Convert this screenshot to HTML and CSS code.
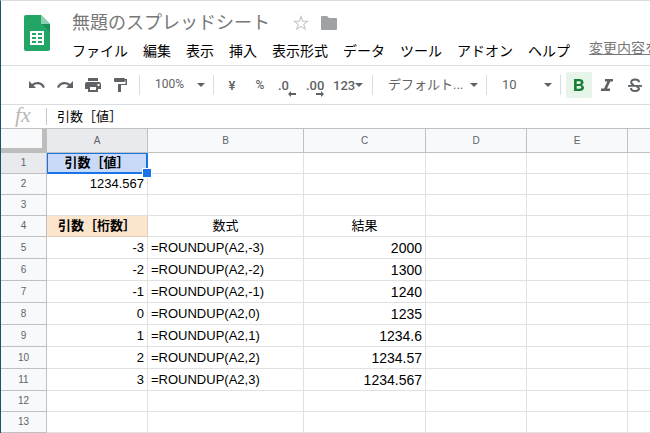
FILE: index.html
```html
<!doctype html>
<html lang="ja">
  <head>
    <meta charset="UTF-8" />
    <meta name="viewport" content="width=device-width, initial-scale=1.0" />
    <title>無題のスプレッドシート</title>
    <link rel="stylesheet" href="styles.css">
  </head>
  <body>
    <div class="app">
      <header class="header">
        <svg class="logo" width="26" height="36" viewBox="0 0 26 36" aria-hidden="true">
          <path d="M2 0H17L26 9V34a2 2 0 0 1-2 2H2a2 2 0 0 1-2-2V2a2 2 0 0 1 2-2z" fill="#23a566" />
          <path d="M17 0l9 9h-9z" fill="#8ed1b1" />
          <path d="M18 9h8v8z" fill="#1c8f57" />
          <path d="M6 16h14v14H6z" fill="#fff" />
          <path d="M8 18h4v2H8zM14 18h4v2h-4zM8 22h4v2H8zM14 22h4v2h-4zM8 26h4v2H8zM14 26h4v2h-4z" fill="#23a566" />
        </svg>
        <div class="header-main">
          <div class="title-row">
            <h1 class="title">無題のスプレッドシート</h1>
            <svg class="star" width="16" height="16" viewBox="0 0 16 16" aria-hidden="true">
              <path d="M8 1.500l1.700 4.600 4.900.2-3.800 3.100 1.300 4.700L8 11.400l-4.100 2.700 1.300-4.700L1.400 6.300l4.900-.2z" fill="none" stroke="#c6c6c6" stroke-width="1.1" />
            </svg>
            <svg width="16" height="14" viewBox="0 0 16 14" aria-hidden="true">
              <path d="M1 0H6l2 2h7a1 1 0 0 1 1 1v10a1 1 0 0 1-1 1H1a1 1 0 0 1-1-1V1a1 1 0 0 1 1-1z" fill="#a0a1a5" />
            </svg>
          </div>
          <nav class="menu">
            <button class="menu-item">ファイル</button>
            <button class="menu-item">編集</button>
            <button class="menu-item">表示</button>
            <button class="menu-item">挿入</button>
            <button class="menu-item">表示形式</button>
            <button class="menu-item">データ</button>
            <button class="menu-item">ツール</button>
            <button class="menu-item">アドオン</button>
            <button class="menu-item">ヘルプ</button>
            <a class="save-state" href="#">変更内容を</a>
          </nav>
        </div>
      </header>

      <div class="toolbar">
        <button class="tool" aria-label="元に戻す">
          <svg width="18" height="18" viewBox="0 0 18 18"><path d="M1 5v7h7L5.600 9.600C6.700 8.700 8 8.200 9.500 8.200c2.600 0 4.600 1.500 5.400 3.900l2.100-.8C15.900 8.100 13 6 9.500 6 7.400 6 5.500 6.800 4 8z" /></svg>
        </button>
        <button class="tool" aria-label="やり直す">
          <svg width="18" height="18" viewBox="0 0 18 18"><path d="M17 5v7h-7l2.400-2.400C11.300 8.700 10 8.200 8.500 8.200c-2.600 0-4.600 1.500-5.400 3.900L1 11.300C2.100 8.100 5 6 8.500 6c2.100 0 4 .8 5.500 2z" /></svg>
        </button>
        <button class="tool" aria-label="印刷">
          <svg width="18" height="18" viewBox="0 0 18 18"><path fill-rule="evenodd" d="M4 2h10v3H4zM3 6h12a2 2 0 0 1 2 2v5h-3v3H4v-3H1V8a2 2 0 0 1 2-2zm3 5v3h6v-3zm7.500-3v2h2V8z" /></svg>
        </button>
        <button class="tool" aria-label="書式を貼り付け">
          <svg width="18" height="18" viewBox="0 0 18 18"><path d="M3 2h9a1 1 0 0 1 1 1h2v6H9v7H6V8h7.500V4.500H13V5a1 1 0 0 1-1 1H3a1 1 0 0 1-1-1V3a1 1 0 0 1 1-1z" /></svg>
        </button>
        <span class="separator"></span>
        <label class="dropdown zoom-level">
          <select aria-label="ズーム"><option>100%</option></select>
        </label>
        <span class="separator"></span>
        <button class="tool">¥</button>
        <button class="tool tool-percent">%</button>
        <button class="tool tool-decimal">.0
          <svg class="arrow" width="8" height="6" viewBox="0 0 8 6"><path d="M0 3l3-3v2h5v2H3v2z" /></svg>
        </button>
        <button class="tool tool-decimal">.00
          <svg class="arrow" width="8" height="6" viewBox="0 0 8 6"><path d="M8 3L5 0v2H0v2h5v2z" /></svg>
        </button>
        <button class="tool tool-format">123<span class="caret"></span></button>
        <span class="separator"></span>
        <label class="dropdown font-family">
          <select aria-label="フォント"><option>デフォルト...</option></select>
        </label>
        <span class="separator"></span>
        <label class="dropdown font-size">
          <select aria-label="フォントサイズ"><option>10</option></select>
        </label>
        <span class="separator"></span>
        <button class="tool tool-active" aria-label="太字">
          <svg width="18" height="18" viewBox="0 0 18 18"><path fill-rule="evenodd" d="M4 3h5.500C12 3 13.500 4.400 13.500 6.300c0 1.200-.6 2.100-1.600 2.600 1.300.4 2.100 1.500 2.100 2.900C14 13.800 12.400 15 10 15H4zm2.700 2.200v2.700h2.500c1 0 1.600-.5 1.600-1.350S10.200 5.200 9.200 5.200zm0 4.700v2.900h2.900c1 0 1.700-.5 1.700-1.450s-.7-1.450-1.700-1.450z" /></svg>
        </button>
        <button class="tool" aria-label="斜体">
          <svg width="18" height="18" viewBox="0 0 18 18"><path d="M7 3h8v2.500h-2.700l-3.200 7H12V15H3v-2.500h3.100l3.200-7H7z" /></svg>
        </button>
        <button class="tool" aria-label="取り消し線">
          <svg width="18" height="18" viewBox="0 0 18 18"><path d="M2 9h14v1.800H2z" /><path d="M13 6.200C13 4.400 11.300 3.500 9.200 3.500S5.200 4.500 5.200 6.300c0 1.200.8 2.100 2.600 2.700M10.500 10.500c1.600.5 2.500 1.200 2.500 2.100 0 1.500-1.600 2.400-3.800 2.400s-4.200-.9-4.200-3" fill="none" stroke="#5f6368" stroke-width="2" /></svg>
        </button>
      </div>

      <div class="formula-bar">
        <span class="fx">fx</span>
        <input class="formula-input" type="text" value="引数［値］" aria-label="数式" />
      </div>

      <table class="sheet">
        <colgroup>
          <col class="col-index" />
          <col class="col-default" />
          <col class="col-formula" />
          <col class="col-result" />
          <col class="col-default" />
          <col class="col-default" />
          <col />
        </colgroup>
        <thead>
          <tr>
            <th class="corner"></th>
            <th class="current">A</th>
            <th>B</th>
            <th>C</th>
            <th>D</th>
            <th>E</th>
            <th></th>
          </tr>
        </thead>
        <tbody>
          <tr><th class="current">1</th><td class="label selected">引数［値］</td><td></td><td></td><td></td><td></td><td></td></tr>
          <tr><th>2</th><td class="number">1234.567</td><td></td><td></td><td></td><td></td><td></td></tr>
          <tr><th>3</th><td></td><td></td><td></td><td></td><td></td><td></td></tr>
          <tr><th>4</th><td class="label digits">引数［桁数］</td><td class="center">数式</td><td class="center">結果</td><td></td><td></td><td></td></tr>
          <tr class="tall"><th>5</th><td class="number">-3</td><td>=ROUNDUP(A2,-3)</td><td class="number result">2000</td><td></td><td></td><td></td></tr>
          <tr class="tall"><th>6</th><td class="number">-2</td><td>=ROUNDUP(A2,-2)</td><td class="number result">1300</td><td></td><td></td><td></td></tr>
          <tr class="tall"><th>7</th><td class="number">-1</td><td>=ROUNDUP(A2,-1)</td><td class="number result">1240</td><td></td><td></td><td></td></tr>
          <tr class="tall"><th>8</th><td class="number">0</td><td>=ROUNDUP(A2,0)</td><td class="number result">1235</td><td></td><td></td><td></td></tr>
          <tr class="tall"><th>9</th><td class="number">1</td><td>=ROUNDUP(A2,1)</td><td class="number result">1234.6</td><td></td><td></td><td></td></tr>
          <tr class="tall"><th>10</th><td class="number">2</td><td>=ROUNDUP(A2,2)</td><td class="number result">1234.57</td><td></td><td></td><td></td></tr>
          <tr class="tall"><th>11</th><td class="number">3</td><td>=ROUNDUP(A2,3)</td><td class="number result">1234.567</td><td></td><td></td><td></td></tr>
          <tr><th>12</th><td></td><td></td><td></td><td></td><td></td><td></td></tr>
          <tr><th>13</th><td></td><td></td><td></td><td></td><td></td><td></td></tr>
        </tbody>
      </table>
    </div>
  </body>
</html>
```
FILE: styles.css
```css
* {
  box-sizing: border-box;
}
body {
  margin: 0;
  overflow: hidden;
  background: #fff;
  font-family: 'Liberation Sans', 'Noto Sans CJK JP', sans-serif;
  font-size: 13px;
  color: #000;
}
button,
input,
select {
  margin: 0;
  padding: 0;
  border: none;
  background: none;
  font: inherit;
  color: inherit;
}
.app {
  border-top: 1px solid #dadce0;
  border-left: 1px solid #17536f;
  overflow: hidden;
}

/* ヘッダー */
.header {
  display: flex;
  height: 65px;
  padding-left: 23px;
  border-bottom: 1px solid #dadce0;
}
.logo {
  flex: none;
  margin-top: 14px;
}
.header-main {
  flex: 1;
  min-width: 0;
  padding: 8px 0 0 22px;
}
.title-row {
  display: flex;
  align-items: center;
  height: 28px;
}
.title {
  margin: 0 23px 0 0;
  font-size: 18px;
  font-weight: normal;
  line-height: 28px;
  color: #777;
}
.star {
  margin-right: 12px;
}
.menu {
  display: flex;
  gap: 15px;
  height: 28px;
  white-space: nowrap;
}
.menu-item {
  flex: none;
  font-size: 14px;
  line-height: 28px;
}
.save-state {
  margin-left: 4px;
  font-size: 14px;
  line-height: 22px;
  color: #777;
}

/* ツールバー */
.toolbar {
  display: flex;
  align-items: center;
  height: 39px;
  padding-left: 22px;
  border-bottom: 1px solid #dadce0;
  font-family: Roboto, 'Noto Sans CJK JP', sans-serif;
  color: #5f6368;
}
.tool {
  display: flex;
  flex: none;
  align-items: center;
  justify-content: center;
  width: 28px;
  height: 26px;
  font-weight: 500;
}
.tool svg {
  fill: #5f6368;
}
.tool-percent {
  font-size: 12px;
}
.tool-decimal {
  position: relative;
  justify-content: flex-start;
  padding-left: 4px;
}
.arrow {
  position: absolute;
  right: 6px;
  bottom: 1px;
}
.tool-format {
  justify-content: flex-start;
  width: 38px;
  padding-left: 3px;
}
.tool-active {
  width: 26px;
  margin: 0 1px;
  border-radius: 2px;
  background: #e6f4ea;
}
.tool-active svg {
  fill: #188038;
}
.separator {
  flex: none;
  width: 1px;
  height: 20px;
  margin: 0 4px;
  background: #dadce0;
}
.caret,
.dropdown::after {
  content: '';
  border: 4px solid transparent;
  border-top-color: #5f6368;
  border-bottom: none;
}
.dropdown {
  display: flex;
  flex: none;
  align-items: center;
  width: 65px;
  padding: 0 4px 0 11px;
}
.dropdown::after {
  flex: none;
}
.dropdown select {
  flex: 1;
  min-width: 0;
  height: 26px;
  padding-bottom: 2px;
  appearance: none;
}
.font-family {
  width: 105px;
}
.zoom-level {
  font-size: 12px;
}

/* 数式バー */
.formula-bar {
  display: flex;
  align-items: center;
  height: 24px;
  padding-left: 14px;
  border-bottom: 1px solid #c0c0c0;
}
.fx {
  width: 31px;
  padding-bottom: 4px;
  font-family: 'Liberation Serif', serif;
  font-size: 22px;
  font-style: italic;
  line-height: 20px;
  color: #b8b8b8;
}
.formula-input {
  flex: 1;
  height: 17px;
  padding: 0 0 3px 10px;
  border-left: 1px solid #c8c8c8;
}

/* シート */
.sheet {
  width: 100%;
  table-layout: fixed;
  border-collapse: separate;
  border-spacing: 0;
}
.col-index {
  width: 46px;
}
.col-default {
  width: 101px;
}
.col-formula {
  width: 156px;
}
.col-result {
  width: 122px;
}
.sheet th,
.sheet td {
  height: 21px;
  padding: 0 3px;
  line-height: 20px;
  white-space: nowrap;
  border-right: 1px solid #e1e1e1;
  border-bottom: 1px solid #e1e1e1;
}
.sheet tr > :last-child {
  border-right: none;
}
.sheet .tall td,
.sheet .tall th {
  height: 22px;
}
.sheet th {
  padding: 0;
  border-color: #c0c0c0;
  background: #f8f9fa;
  font-size: 10px;
  font-weight: normal;
  color: #5f6368;
}
.sheet thead th {
  height: 24px;
}
.sheet th.current {
  background: #e8eaed;
}
.sheet thead .corner {
  border-right: 5px solid #bdbdbd;
  border-bottom: 5px solid #bdbdbd;
}
.sheet .number {
  text-align: right;
}
.sheet .result {
  font-size: 14px;
}
.sheet .center {
  text-align: center;
}
.sheet .label {
  font-weight: bold;
  text-align: center;
}
.sheet .digits {
  background: #fce5cd;
  border-color: #e3cebb;
}
.sheet .selected {
  position: relative;
  background: #c9daf8;
}
/* 選択枠とフィルハンドル */
.selected::before {
  content: '';
  position: absolute;
  inset: 0 -1px -1px 0;
  border: solid #1a73e8;
  border-width: 1px 2px 2px 1px;
}
.selected::after {
  content: '';
  position: absolute;
  right: -5px;
  bottom: -5px;
  width: 8px;
  height: 8px;
  border: 1px solid #fff;
  background: #1a73e8;
}
```
